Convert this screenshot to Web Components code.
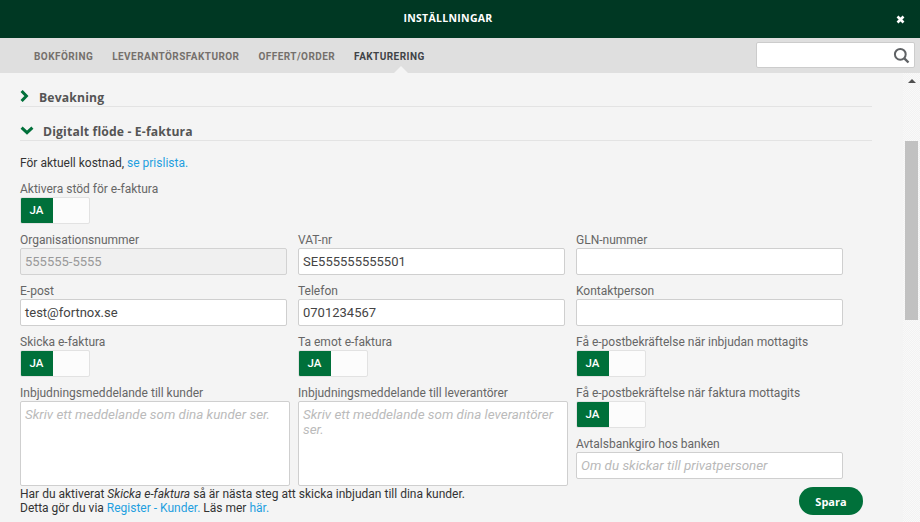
<!DOCTYPE html>
<html lang="sv"><head><meta charset="utf-8"><title>Inställningar</title>
<style>
html,body{margin:0;padding:0;height:522px;width:920px;overflow:hidden;background:#f4f4f4;font-family:Roboto,"Liberation Sans",sans-serif;}
</style></head><body>
<settings-app></settings-app>
<script>
const HEAD='"Open Sans",Roboto,sans-serif';
function def(name,html){
  customElements.define(name,class extends HTMLElement{
    connectedCallback(){
      if(this.shadowRoot)return;
      const r=this.attachShadow({mode:'open'});
      r.innerHTML=typeof html==='function'?html(this):html;
    }
  });
}
def('app-header',`<style>:host{display:flex;height:38px;background:#003823;color:#fff;align-items:center;justify-content:center;position:relative;flex:none;box-sizing:border-box;padding-right:24px}
.t{font:700 10.5px/1 ${HEAD};letter-spacing:.3px;margin-top:-1px}
svg{position:absolute;right:15px;top:15px}</style>
<span class="t">INSTÄLLNINGAR</span>
<svg width="9" height="9" viewBox="0 0 9 9"><path d="M1.5 1.5l6 6M7.5 1.5l-6 6" stroke="#fff" stroke-width="2.6"/></svg>`);
def('nav-tab',t=>`<style>:host{display:block;font:700 10px/1 Roboto,sans-serif;letter-spacing:.44px;color:${t.hasAttribute('active')?'#3f4347':'#75706c'};position:relative;white-space:nowrap;}
${t.hasAttribute('active')?`i{position:absolute;left:40px;top:14px;border:7px solid transparent;border-top:0;border-bottom-color:#f4f4f4}`:''}</style><slot></slot><i></i>`);
def('search-box',`<style>:host{display:flex;width:159px;height:26px;margin-top:-1px;box-sizing:border-box;background:#fff;border:1px solid #ccc;border-radius:2px;align-items:center;justify-content:flex-end;padding-right:4px}</style>
<svg width="17" height="17" viewBox="0 0 17 17" fill="none"><circle cx="7.3" cy="7.3" r="5.4" stroke="#5f6265" stroke-width="2"/><path d="M11.3 11.3l4.2 4.2" stroke="#5f6265" stroke-width="2.4"/></svg>`);
def('app-nav',`<style>:host{display:flex;height:35px;background:#dfdfdf;align-items:center;flex:none;box-sizing:border-box;padding:0 5px 0 34px}
.tabs{display:flex;gap:19px;margin-right:auto;margin-top:3px}</style>
<div class="tabs"><slot></slot></div><search-box></search-box>`);
def('section-head',t=>`<style>:host{display:flex;align-items:flex-end;height:20px;box-sizing:border-box;padding-bottom:2px;border-bottom:1px solid #e3e3e3;font:700 12.2px/1 ${HEAD};color:#555;letter-spacing:.15px}
svg{flex:none;margin-right:${t.hasAttribute('open')?'9px':'10px'};align-self:center;margin-top:${t.hasAttribute('open')?'2px':'0'}}</style>
${t.hasAttribute('open')
?'<svg width="14" height="9" viewBox="0 0 14 9" fill="none"><path d="M1.6 1.6L7 6.6l5.4-5" stroke="#00703a" stroke-width="3"/></svg>'
:'<svg width="9" height="12" viewBox="0 0 9 12" fill="none"><path d="M1.6 1L6.4 6 1.6 11" stroke="#00703a" stroke-width="3"/></svg>'}<slot></slot>`);
def('form-label',`<style>:host{display:block;font:12px/14px Roboto,sans-serif;color:#666;white-space:nowrap;height:14px}</style><slot></slot>`);
def('toggle-ja',`<style>:host{display:flex;width:70px;height:27px;box-sizing:border-box;margin-top:1px;border:1px solid #e2e2e2;border-radius:2px;background:#fcfcfc;overflow:hidden}
b{width:33px;margin:-1px 0 -1px -1px;background:#00703a;color:#fff;font:500 11.5px/27px Roboto,sans-serif;text-align:center;flex:none;border-radius:2px 0 0 2px}</style><b>JA</b>`);
def('text-field',t=>`<style>:host{display:block;width:267px;height:27px;box-sizing:border-box;margin-top:1px;border:1px solid ${t.hasAttribute('disabled')?'#d2d2d2':'#cfcfcf'};border-radius:2px;background:${t.hasAttribute('disabled')?'#f0f0f0':'#fff'};padding:0 4px;font:13px/25px Roboto,sans-serif;color:${t.hasAttribute('disabled')?'#999':'#444'};white-space:nowrap;overflow:hidden}
:host([ph]){color:#b9b9b9;font-style:italic;font-size:13.4px}</style><slot></slot>`);
def('text-area',`<style>:host{display:block;width:270px;height:85px;box-sizing:border-box;margin-top:1px;border:1px solid #cfcfcf;border-radius:2px;background:#fff;padding:5px 4px;font:italic 13.4px/15px Roboto,sans-serif;color:#bbb}</style><slot></slot>`);
def('primary-button',`<style>:host{display:block;width:64px;height:28px;border-radius:14px;background:#00703a;color:#fff;font:700 11px/29px ${HEAD};text-align:center}</style><slot></slot>`);
def('scroll-bar',`<style>:host{display:flex;flex-direction:column;width:17px;flex:none;background:repeating-conic-gradient(#f2f2f2 0 25%,#f9f9f9 0 50%) 0 0/2px 2px;align-items:center;box-sizing:border-box;padding-top:6px}
i{border:4px solid transparent;border-top:0;border-bottom:4px solid #505050;display:block;height:0;margin-bottom:58px}
b{display:block;width:13px;height:179px;background:#c1c1c1}</style><i></i><b></b>`);
def('settings-form',`<style>:host{display:block;padding:0 0 0 20px;width:903px;flex:none;box-sizing:border-box;color:#333}
.heads{width:852px;padding-top:14px;display:flex;flex-direction:column;gap:14px}
p{margin:0;font:12px/14px Roboto,sans-serif;color:#333}
a{color:#1f9fdf;text-decoration:none}
.intro{margin-top:15px}
.grid{display:grid;grid-template-columns:278px 278px 278px;margin-top:9px}
.c{height:51px}
.left{display:grid;grid-template-columns:278px 278px}
.bottom{display:grid;grid-template-columns:556px 278px}
.c3 form-label+toggle-ja{margin-bottom:9px}
.msg{margin-top:1px}
.end{display:flex;justify-content:flex-end;margin:8px 0 0;width:287px}
</style>
<div class="heads"><section-head>Bevakning</section-head><section-head open>Digitalt flöde - E-faktura</section-head></div>
<p class="intro">För aktuell kostnad, <a>se prislista.</a></p>
<form-label style="margin-top:12px">Aktivera stöd för e-faktura</form-label>
<toggle-ja></toggle-ja>
<div class="grid">
 <div class="c"><form-label>Organisationsnummer</form-label><text-field disabled>555555-5555</text-field></div>
 <div class="c"><form-label>VAT-nr</form-label><text-field>SE555555555501</text-field></div>
 <div class="c"><form-label>GLN-nummer</form-label><text-field></text-field></div>
 <div class="c"><form-label>E-post</form-label><text-field>test@fortnox.se</text-field></div>
 <div class="c"><form-label>Telefon</form-label><text-field>0701234567</text-field></div>
 <div class="c"><form-label>Kontaktperson</form-label><text-field></text-field></div>
 <div class="c"><form-label>Skicka e-faktura</form-label><toggle-ja></toggle-ja></div>
 <div class="c"><form-label>Ta emot e-faktura</form-label><toggle-ja></toggle-ja></div>
 <div class="c"><form-label>Få e-postbekräftelse när inbjudan mottagits</form-label><toggle-ja></toggle-ja></div>
</div>
<div class="bottom">
 <div>
  <div class="left">
   <div><form-label>Inbjudningsmeddelande till kunder</form-label><text-area>Skriv ett meddelande som dina kunder ser.</text-area></div>
   <div><form-label>Inbjudningsmeddelande till leverantörer</form-label><text-area>Skriv ett meddelande som dina leverantörer ser.</text-area></div>
  </div>
  <p class="msg">Har du aktiverat <em>Skicka e-faktura</em> så är nästa steg att skicka inbjudan till dina kunder.<br>Detta gör du via <a>Register - Kunder.</a> Läs mer <a>här.</a></p>
 </div>
 <div class="c3">
  <form-label>Få e-postbekräftelse när faktura mottagits</form-label><toggle-ja></toggle-ja>
  <form-label>Avtalsbankgiro hos banken</form-label><text-field ph>Om du skickar till privatpersoner</text-field>
  <div class="end"><primary-button>Spara</primary-button></div>
 </div>
</div>`);
def('settings-app',`<style>:host{display:flex;flex-direction:column;width:920px;height:522px;overflow:hidden}
.body{display:flex;flex:1;min-height:0;overflow:hidden;background:#f4f4f4}
app-nav{position:relative;z-index:1}</style>
<app-header></app-header>
<app-nav><nav-tab>BOKFÖRING</nav-tab><nav-tab>LEVERANTÖRSFAKTUROR</nav-tab><nav-tab>OFFERT/ORDER</nav-tab><nav-tab active>FAKTURERING</nav-tab></app-nav>
<div class="body"><settings-form></settings-form><scroll-bar></scroll-bar></div>`);
</script>
</body></html>
